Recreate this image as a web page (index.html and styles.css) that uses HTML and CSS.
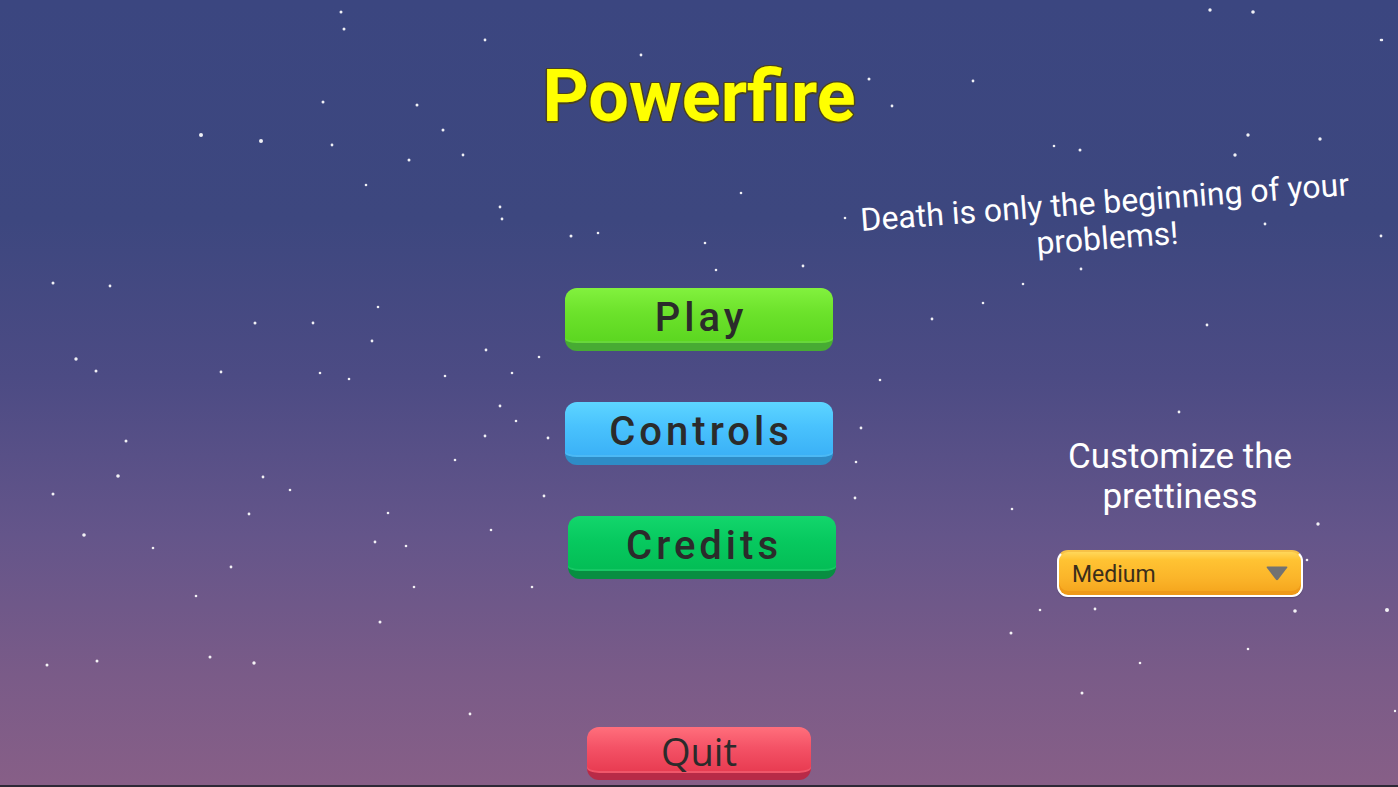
FILE: index.html
```html
<!DOCTYPE html>
<html lang="en">
<head>
    <meta charset="UTF-8">
    <meta name="viewport" content="width=device-width, initial-scale=1.0">
    <title>Powerfire</title>
    <link rel="stylesheet" href="styles.css">
</head>
<body>
    <div class="screen">
        <!-- star field -->
        <svg class="stars" viewBox="0 0 1398 787" aria-hidden="true">
            <g fill="#fff">
                <circle cx="341" cy="12" r="1.5"/><circle cx="344" cy="29" r="1.5"/><circle cx="485" cy="40" r="1.4"/>
                <circle cx="641" cy="55" r="1.4"/><circle cx="1210" cy="10" r="1.7"/><circle cx="1253" cy="12" r="1.8"/>
                <circle cx="1381" cy="40" r="1.3"/><circle cx="201" cy="135" r="2"/><circle cx="261" cy="141" r="2"/>
                <circle cx="323" cy="102" r="1.5"/><circle cx="332" cy="145" r="1.4"/><circle cx="417" cy="105" r="1.5"/>
                <circle cx="443" cy="130" r="1.5"/><circle cx="409" cy="160" r="1.5"/><circle cx="463" cy="155" r="1.4"/>
                <circle cx="366" cy="185" r="1.3"/><circle cx="500" cy="207" r="1.4"/><circle cx="502" cy="219" r="1.4"/>
                <circle cx="571" cy="236" r="1.5"/><circle cx="598" cy="233" r="1.3"/><circle cx="705" cy="243" r="1.3"/>
                <circle cx="741" cy="193" r="1.3"/><circle cx="869" cy="79" r="1.5"/><circle cx="892" cy="106" r="1.4"/>
                <circle cx="973" cy="81" r="1.4"/><circle cx="1054" cy="146" r="1.3"/><circle cx="1080" cy="150" r="1.5"/>
                <circle cx="1235" cy="155" r="1.7"/><circle cx="1248" cy="135" r="1.7"/><circle cx="1320" cy="139" r="1.7"/>
                <circle cx="1382" cy="40" r="1.2"/><circle cx="1265" cy="224" r="1.4"/><circle cx="1381" cy="236" r="1.4"/>
                <circle cx="1081" cy="269" r="1.4"/><circle cx="1023" cy="284" r="1.3"/><circle cx="1207" cy="325" r="1.4"/>
                <circle cx="932" cy="319" r="1.4"/><circle cx="983" cy="303" r="1.3"/><circle cx="845" cy="218" r="1.3"/>
                <circle cx="803" cy="266" r="1.4"/><circle cx="716" cy="270" r="1.3"/><circle cx="53" cy="283" r="1.5"/>
                <circle cx="110" cy="286" r="1.4"/><circle cx="255" cy="323" r="1.5"/><circle cx="313" cy="323" r="1.4"/>
                <circle cx="372" cy="341" r="1.4"/><circle cx="378" cy="307" r="1.3"/><circle cx="76" cy="359" r="1.7"/>
                <circle cx="96" cy="371" r="1.5"/><circle cx="221" cy="372" r="1.4"/><circle cx="320" cy="373" r="1.3"/>
                <circle cx="349" cy="379" r="1.3"/><circle cx="486" cy="350" r="1.4"/><circle cx="512" cy="373" r="1.3"/>
                <circle cx="539" cy="357" r="1.3"/><circle cx="445" cy="376" r="1.3"/><circle cx="500" cy="406" r="1.4"/>
                <circle cx="516" cy="421" r="1.3"/><circle cx="485" cy="436" r="1.4"/><circle cx="455" cy="460" r="1.3"/>
                <circle cx="548" cy="438" r="1.4"/><circle cx="880" cy="380" r="1.3"/><circle cx="861" cy="428" r="1.4"/>
                <circle cx="856" cy="462" r="1.3"/><circle cx="855" cy="498" r="1.4"/><circle cx="1179" cy="412" r="1.4"/>
                <circle cx="126" cy="441" r="1.5"/><circle cx="118" cy="476" r="1.8"/><circle cx="53" cy="494" r="1.5"/>
                <circle cx="263" cy="477" r="1.4"/><circle cx="290" cy="490" r="1.3"/><circle cx="249" cy="514" r="1.4"/>
                <circle cx="375" cy="542" r="1.4"/><circle cx="388" cy="513" r="1.3"/><circle cx="406" cy="546" r="1.3"/>
                <circle cx="491" cy="530" r="1.3"/><circle cx="544" cy="496" r="1.4"/><circle cx="532" cy="587" r="1.3"/>
                <circle cx="84" cy="535" r="1.8"/><circle cx="231" cy="567" r="1.4"/><circle cx="153" cy="548" r="1.3"/>
                <circle cx="196" cy="596" r="1.3"/><circle cx="210" cy="657" r="1.5"/><circle cx="254" cy="663" r="1.7"/>
                <circle cx="380" cy="622" r="1.5"/><circle cx="414" cy="587" r="1.3"/><circle cx="47" cy="665" r="1.5"/>
                <circle cx="97" cy="661" r="1.5"/><circle cx="1318" cy="524" r="1.7"/><circle cx="1012" cy="509" r="1.3"/>
                <circle cx="1040" cy="610" r="1.3"/><circle cx="1095" cy="609" r="1.4"/><circle cx="1011" cy="633" r="1.5"/>
                <circle cx="1082" cy="693" r="1.5"/><circle cx="1140" cy="663" r="1.3"/><circle cx="1248" cy="649" r="1.3"/>
                <circle cx="1295" cy="611" r="1.8"/><circle cx="1387" cy="610" r="2"/><circle cx="1395" cy="711" r="1.2"/>
                <circle cx="470" cy="714" r="1.4"/><circle cx="775" cy="545" r="1.2"/><circle cx="1307" cy="560" r="1.3"/>
            </g>
        </svg>

        <h1 class="title">Powerfire</h1>

        <div class="stage">
            <div class="side"></div>

            <div class="menu">
                <button class="btn btn-play">Play</button>
                <button class="btn btn-controls">Controls</button>
                <button class="btn btn-credits">Credits</button>
                <button class="btn btn-quit">Quit</button>
            </div>

            <div class="side side-right">
                <p class="tagline">Death is only the beginning of your<br>problems!</p>

                <div class="quality">
                    <p class="quality-label">Customize the<br>prettiness</p>
                    <div class="dropdown">
                        <span class="dropdown-value">Medium</span>
                        <svg class="dropdown-arrow" width="24" height="16" viewBox="0 0 24 16">
                            <path d="M2.5 1.5 H21.5 Q23 1.5 22 3 L13.2 14.5 Q12 15.8 10.8 14.5 L2 3 Q1 1.5 2.5 1.5 Z" fill="#727272"/>
                        </svg>
                    </div>
                </div>
            </div>
        </div>
    </div>
</body>
</html>
```

FILE: styles.css
```css
* {
    box-sizing: border-box;
}
body {
    margin: 0;
    font-family: Roboto, "Liberation Sans", sans-serif;
    overflow: hidden;
}
.screen {
    position: relative;
    height: 787px;
    display: flex;
    flex-direction: column;
    border-bottom: 2px solid #2d2936;
    background: linear-gradient(180deg, #3b4680 0%, #3d477f 28%, #4c4b84 48%, #64558a 68%, #7a5b88 86%, #875f87 100%);
    overflow: hidden;
}
.stars {
    position: absolute;
    top: 0;
    left: 0;
    width: 1398px;
    height: 787px;
    opacity: 0.92;
}
.title {
    position: relative;
    margin: 61px 0 0;
    font-size: 72px;
    font-weight: 700;
    line-height: 72px;
    text-align: center;
    color: #ffff00;
    text-shadow: 1px 1px 0 #4a4320, -1px -1px 0 #4a4320, 1px -1px 0 #4a4320, -1px 1px 0 #4a4320,
        0 1.5px 0 #4a4320, 0 -1.5px 0 #4a4320, 1.5px 0 0 #4a4320, -1.5px 0 0 #4a4320;
}
.stage {
    position: relative;
    flex: 1;
    display: grid;
    grid-template-columns: 1fr 300px 1fr;
}

/* main menu */
.menu {
    display: flex;
    flex-direction: column;
    align-items: center;
    padding-top: 155px;
}
.btn {
    width: 268px;
    height: 63px;
    margin-bottom: 51px;
    padding: 5px 0 0;
    border: none;
    border-bottom: 8px solid;
    border-radius: 12px;
    font-family: Roboto, "Liberation Sans", sans-serif;
    font-size: 40px;
    font-weight: 500;
    line-height: 40px;
    letter-spacing: 4px;
    text-indent: 4px;
    color: #2b2b2b;
    cursor: pointer;
}
.btn-play {
    background: linear-gradient(180deg, #82f13e 0%, #6ce22b 45%, #5bd620 100%);
    border-bottom-color: #47ab33;
    box-shadow: inset 0 -2px 0 #67d93a;
}
.btn-controls {
    background: linear-gradient(180deg, #5dd5ff 0%, #49c2fd 45%, #3ab0f6 100%);
    border-bottom-color: #2e8cc6;
    box-shadow: inset 0 -2px 0 #4cb9f5;
}
.btn-credits {
    margin-left: 6px;
    background: linear-gradient(180deg, #13d66c 0%, #07c95f 45%, #03bd55 100%);
    border-bottom-color: #088e41;
    box-shadow: inset 0 -2px 0 #16c865;
}
.btn-quit {
    width: 224px;
    height: 53px;
    margin: auto 0 5px;
    padding-top: 1px;
    border-bottom-width: 7px;
    font-family: "Open Sans", sans-serif;
    font-size: 38px;
    font-weight: 400;
    letter-spacing: 0;
    text-indent: 0;
    background: linear-gradient(180deg, #ff6f7c 0%, #f45266 45%, #e73a50 100%);
    border-bottom-color: #b82a47;
    box-shadow: inset 0 -2px 0 #f0566a;
}

/* right side panel */
.side-right {
    padding-top: 51px;
    color: #fff;
}
.tagline {
    width: 514px;
    margin: 0;
    font-size: 32px;
    line-height: 36px;
    text-align: center;
    transform: rotate(-4.2deg);
}
.quality {
    width: 262px;
    margin: 181px 0 0 200px;
    text-align: center;
}
.quality-label {
    margin: 0;
    font-size: 35px;
    line-height: 40px;
}
.dropdown {
    width: 246px;
    height: 47px;
    margin: 33px 0 0 8px;
    padding: 0 12px 0 13px;
    display: flex;
    align-items: center;
    justify-content: space-between;
    border: 2px solid #fff;
    border-top-color: #f7c247;
    border-radius: 11px;
    background: linear-gradient(180deg, #ffd75a 0%, #ffc333 18%, #fbb52a 60%, #f4a31b 100%);
    box-shadow: inset 0 -4px 0 #ef9a18, 0 1px 1px rgba(0, 0, 0, 0.2);
}
.dropdown-value {
    padding-top: 2px;
    font-size: 23px;
    color: #3b2e1a;
}
.dropdown-arrow {
    margin-top: -2px;
}
```
